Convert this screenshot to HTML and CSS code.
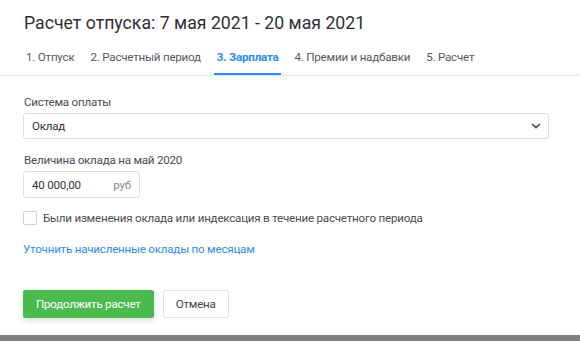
FILE: index.html
```html
<!DOCTYPE html>
<html lang="ru">
<head>
<meta charset="utf-8">
<link rel="stylesheet" href="styles.css">
</head>
<body>
<div class="dialog">
  <div class="head">
    <h1 class="title">Расчет отпуска: 7 мая 2021 - 20 мая 2021</h1>
    <nav class="tabs">
      <span class="tab">1. Отпуск</span>
      <span class="tab">2. Расчетный период</span>
      <span class="tab active">3. Зарплата</span>
      <span class="tab">4. Премии и надбавки</span>
      <span class="tab">5. Расчет</span>
    </nav>
  </div>
  <div class="body">
    <div class="label">Система оплаты</div>
    <div class="select">
      <span>Оклад</span>
      <svg class="chev" width="10" height="6" viewBox="0 0 10 6"><path d="M1 1l4 3.6L9 1" fill="none" stroke="#444b55" stroke-width="1.6"/></svg>
    </div>
    <div class="label second">Величина оклада на май 2020</div>
    <div class="money">
      <span class="val">40 000,00</span>
      <span class="unit">руб</span>
    </div>
    <label class="check"><span class="box"></span><span>Были изменения оклада или индексация в течение расчетного периода</span></label>
    <a class="link">Уточнить начисленные оклады по месяцам</a>
    <div class="actions">
      <button class="btn primary">Продолжить расчет</button>
      <button class="btn">Отмена</button>
    </div>
  </div>
  <div class="bottom"></div>
</div>
</body>
</html>
```
FILE: styles.css
```css
html, body { margin: 0; padding: 0; background: #fff; }
body { font-family: Roboto, "Open Sans", sans-serif; color: #333; width: 580px; height: 341px; overflow: hidden; letter-spacing: -0.22px; }
.dialog { display: flex; flex-direction: column; height: 341px; }
.head { padding: 11px 0 0 0; border-bottom: 1px solid #e3e4ea; }
.title { margin: 0 0 0 24px; font-weight: 400; font-size: 17.7px; line-height: 24px; color: #2f2f33; letter-spacing: 0; }
.tabs { display: flex; gap: 10px; margin: 11px 0 0 23px; }
.tab { font-size: 11.6px; line-height: 16px; color: #555a60; padding: 3px 3px 8px; border-bottom: 2px solid transparent; }
.tab.active { color: #2d8cf0; font-weight: 700; border-bottom-color: #2d8cf0; }
.body { padding: 18px 31px 0 23px; display: flex; flex-direction: column; align-items: flex-start; flex: 1; }
.label { font-size: 11.6px; line-height: 16px; color: #4a4d52; margin-left: 1px; }
.label.second { margin-top: 13px; }
.select { margin-top: 3px; align-self: stretch; height: 24px; border: 1px solid #dcdfe8; border-radius: 3px; display: flex; align-items: center; justify-content: space-between; padding: 0 7px 0 8px; font-size: 11.6px; color: #333; }
.money { margin-top: 3px; height: 25px; border: 1px solid #dcdfe8; border-radius: 3px; display: flex; align-items: center; justify-content: space-between; padding: 0 8px; width: 99px; font-size: 11.6px; }
.val { color: #333; }
.unit { color: #8a8d93; }
.check { margin-top: 12px; display: flex; align-items: center; gap: 6px; font-size: 11.6px; line-height: 16px; color: #4a4d52; }
.box { width: 12px; height: 12px; border: 1px solid #cfd2da; border-radius: 2px; background: #fff; }
.link { margin-top: 15px; font-size: 11.6px; line-height: 16px; color: #2d8cf0; }
.actions { margin-top: 33px; display: flex; gap: 9px; }
.btn { font-family: inherit; letter-spacing: inherit; font-size: 11.6px; height: 28px; border-radius: 2px; border: 1px solid #dfe2ea; background: #fff; color: #444; padding: 0 12px; }
.btn.primary { background: #4cbb4f; border-color: #4cbb4f; color: #fff; box-shadow: 0 3px 6px rgba(0,0,0,0.12); }
.bottom { height: 6px; background: #7f7f7f; }
```
